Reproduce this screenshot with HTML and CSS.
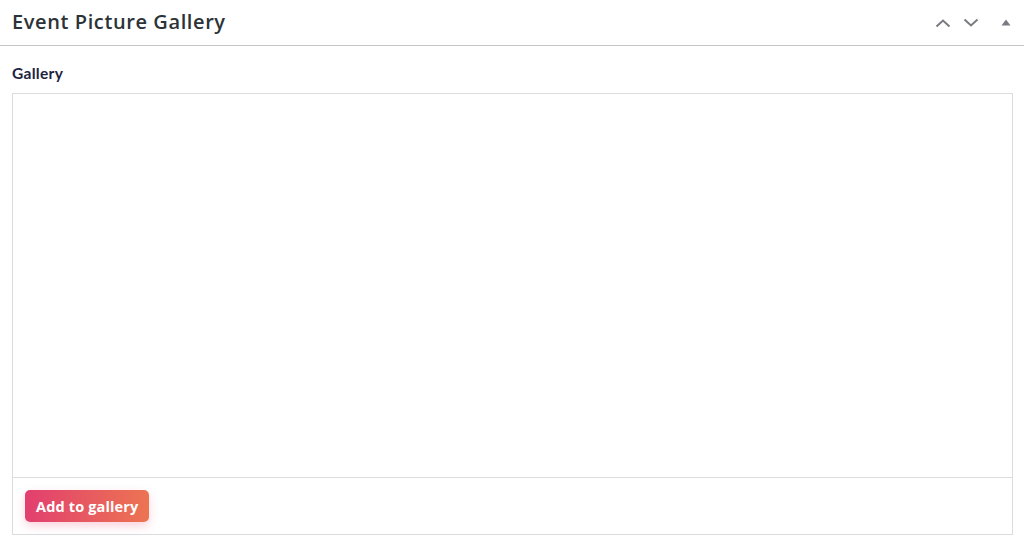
FILE: index.html
```html
<!DOCTYPE html>
<html lang="en">
  <head>
    <meta charset="UTF-8" />
    <title>Event Picture Gallery</title>
    <link rel="stylesheet" href="styles.css">
  </head>
  <body>
    <div class="postbox">
      <div class="postbox-header">
        <h2>Event Picture Gallery</h2>
        <div class="handle-actions">
          <button class="handle-btn" aria-label="Move up">
            <svg width="16" height="10" viewBox="0 0 16 10"><path d="M1.5 8.5 L8 2.5 L14.5 8.5" fill="none" stroke="#787c82" stroke-width="2"/></svg>
          </button>
          <button class="handle-btn" aria-label="Move down">
            <svg width="16" height="10" viewBox="0 0 16 10"><path d="M1.5 1.5 L8 7.5 L14.5 1.5" fill="none" stroke="#787c82" stroke-width="2"/></svg>
          </button>
          <button class="handle-btn toggle" aria-label="Toggle panel">
            <svg width="10" height="7" viewBox="0 0 10 7"><path d="M5 0.5 L9.5 6.5 L0.5 6.5 Z" fill="#787c82"/></svg>
          </button>
        </div>
      </div>
      <div class="inside">
        <label class="field-label">Gallery</label>
        <div class="gallery-box">
          <div class="gallery-items"></div>
          <div class="gallery-footer">
            <button class="add-btn" type="button">Add to gallery</button>
          </div>
        </div>
      </div>
    </div>
  </body>
</html>
```

FILE: styles.css
```css
body {
  margin: 0;
  background: #fff;
  font-family: "Open Sans", sans-serif;
}

.postbox {
  width: 1024px;
  height: 550px;
  background: #fff;
}

.postbox-header {
  height: 46px;
  border-bottom: 1px solid #c3c4c7;
  display: flex;
  align-items: center;
  justify-content: space-between;
  padding: 0 13px 0 12px;
  box-sizing: border-box;
}

.postbox-header h2 {
  margin: 0;
  font-size: 20px;
  font-weight: 600;
  color: #2c3338;
  letter-spacing: 0.6px;
  padding-bottom: 2px;
}

.handle-actions {
  display: flex;
  align-items: center;
  gap: 12px;
}

.handle-btn {
  border: none;
  background: none;
  padding: 0;
  width: 16px;
  height: 16px;
  display: flex;
  align-items: center;
  justify-content: center;
}

.handle-btn.toggle {
  margin-left: 10px;
  width: 10px;
}

.inside {
  padding: 19px 11px 0 12px;
}

.field-label {
  display: block;
  font-family: Lato, sans-serif;
  font-weight: 700;
  font-size: 15.5px;
  letter-spacing: 0.3px;
  color: #1d2340;
  line-height: 16px;
  margin-bottom: 12px;
}

.gallery-box {
  border: 1px solid #dcdcde;
  height: 442px;
  box-sizing: border-box;
  display: flex;
  flex-direction: column;
}

.gallery-items {
  flex: 1;
  border-bottom: 1px solid #dcdcde;
}

.gallery-footer {
  height: 56px;
  padding: 12px 12px 0;
  box-sizing: border-box;
}

.add-btn {
  height: 32px;
  padding: 0 11px;
  border: none;
  border-radius: 5px;
  background: linear-gradient(90deg, #e23f6f 0%, #ec7452 100%);
  color: #fff;
  font-family: "Open Sans", sans-serif;
  font-weight: 700;
  font-size: 14.5px;
  letter-spacing: 0.15px;
  box-shadow: 0 4px 10px rgba(236, 80, 120, 0.25);
  cursor: pointer;
}
```
